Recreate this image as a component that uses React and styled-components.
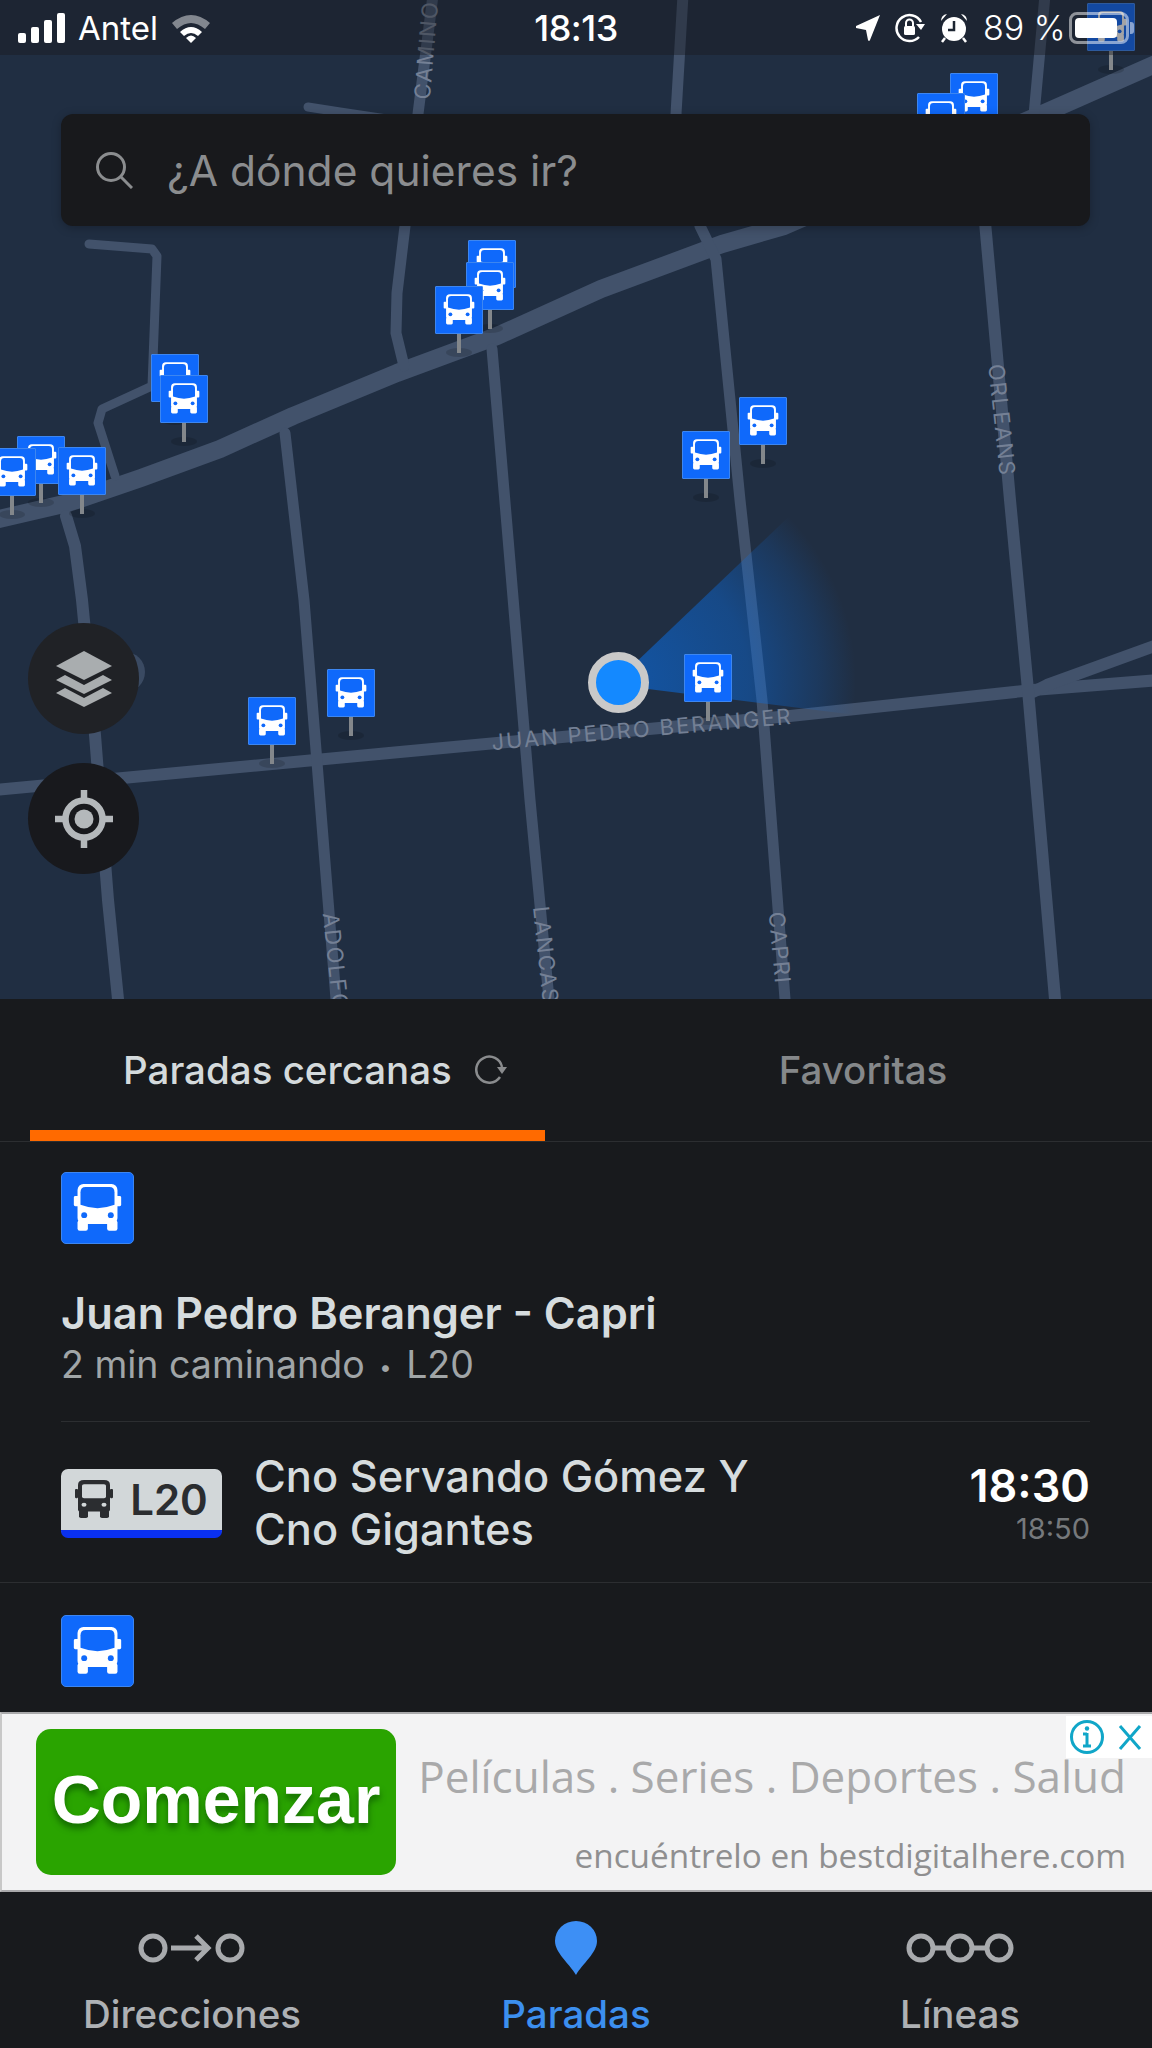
import React from 'react'
import styled, { createGlobalStyle } from 'styled-components'

const GlobalStyle = createGlobalStyle`
  html, body { margin: 0; padding: 0; background: #181a1d; }
  * { box-sizing: border-box; }
`

const Page = styled.div`
  width: 1152px;
  height: 2048px;
  display: flex;
  flex-direction: column;
  overflow: hidden;
  background: #181a1d;
  font-family: Inter, "Noto Sans", sans-serif;
`

const MapArea = styled.div`
  position: relative;
  flex: 0 0 999px;
  overflow: hidden;
  background: #202e42;
`

const MapDrawing = styled.svg`
  position: absolute;
  top: 0;
  left: 0;
`

const StreetLabel = styled.span`
  position: absolute;
  left: ${({ $x }) => $x}px;
  top: ${({ $y }) => $y}px;
  transform: translate(-50%, -50%) rotate(${({ $r }) => $r}deg);
  font-size: 22px;
  letter-spacing: ${({ $s }) => $s || 1.5}px;
  color: #748095;
  white-space: nowrap;
`

const Pin = styled.div`
  position: absolute;
  left: ${({ $x }) => $x}px;
  top: ${({ $y }) => $y}px;
  width: 48px;
  height: 70px;
  &::before {
    content: '';
    position: absolute;
    left: 11px;
    top: 62px;
    width: 26px;
    height: 9px;
    border-radius: 50%;
    background: rgba(0, 0, 0, 0.14);
  }
  &::after {
    content: '';
    position: absolute;
    left: 22px;
    top: 48px;
    width: 4px;
    height: 19px;
    background: #83878b;
  }
`

const Sign = styled.div`
  width: ${({ $big }) => ($big ? 73 : 48)}px;
  height: ${({ $big }) => ($big ? 72 : 48)}px;
  border-radius: ${({ $big }) => ($big ? 5 : 1)}px;
  background: #0f69fb;
  border: 1px solid #3d86f0;
  display: flex;
  position: relative;
  z-index: 1;
`

const Dot = styled.div`
  position: absolute;
  left: 588px;
  top: 652px;
  width: 61px;
  height: 61px;
  border-radius: 50%;
  background: #1489ff;
  border: 8px solid #c9c9c9;
`

const RoundButton = styled.div`
  position: absolute;
  z-index: 2;
  left: 28px;
  top: ${({ $y }) => $y}px;
  width: 111px;
  height: 111px;
  border-radius: 50%;
  background: ${({ $bg }) => $bg};
  display: flex;
  align-items: center;
  justify-content: center;
`

const StatusBar = styled.div`
  position: absolute;
  z-index: 3;
  top: 0;
  left: 0;
  width: 100%;
  height: 55px;
  padding: 0 0 0 18px;
  display: flex;
  align-items: center;
  color: #fff;
  font-size: 33px;
  background: rgba(24, 26, 29, 0.4);
`

const StatusLeft = styled.div`
  display: flex;
  align-items: center;
  width: 390px;
  gap: 12px;
`

const StatusTime = styled.div`
  width: 336px;
  text-align: center;
  font-size: 36px;
  font-weight: 500;
  letter-spacing: -0.5px;
`

const StatusRight = styled.div`
  display: flex;
  align-items: center;
  gap: 15px;
  padding-left: 112px;
`

const Percent = styled.span`
  white-space: nowrap;
  margin-right: -12px;
  font-size: 34px;
  font-weight: 300;
`

const Battery = styled.div`
  position: relative;
  width: 60px;
  height: 32px;
  border: 3px solid rgba(255, 255, 255, 0.5);
  border-radius: 8px;
  padding: 3px;
  &::after {
    content: '';
    position: absolute;
    right: -8px;
    top: 7px;
    width: 4px;
    height: 12px;
    border-radius: 0 3px 3px 0;
    background: rgba(255, 255, 255, 0.5);
  }
`

const BatteryFill = styled.div`
  width: 89%;
  height: 100%;
  border-radius: 4px;
  background: #fff;
`

const SearchBar = styled.div`
  position: absolute;
  z-index: 2;
  left: 61px;
  top: 114px;
  width: 1029px;
  height: 112px;
  border-radius: 12px;
  background: #18191c;
  box-shadow: 0 2px 10px rgba(0, 0, 0, 0.25);
  display: flex;
  align-items: center;
  padding-left: 34px;
  gap: 34px;
  font-size: 42.5px;
  color: #8b8d8f;
`

const TabBar = styled.div`
  flex: 0 0 143px;
  display: flex;
  padding: 0 0 0 30px;
  border-bottom: 1px solid #2c2e31;
`

const Tab = styled.div`
  position: relative;
  display: flex;
  align-items: center;
  gap: 21px;
  padding-left: ${({ $active }) => ($active ? 93 : 0)}px;
  width: ${({ $active }) => ($active ? '515px' : 'auto')};
  flex: ${({ $active }) => ($active ? '0 0 auto' : '1')};
  justify-content: ${({ $active }) => ($active ? 'flex-start' : 'center')};
  margin-left: ${({ $active }) => ($active ? 0 : 29)}px;
  font-size: 38.5px;
  font-weight: 500;
  color: ${({ $active }) => ($active ? '#d4dadc' : '#85888a')};
  &::after {
    content: '';
    display: ${({ $active }) => ($active ? 'block' : 'none')};
    position: absolute;
    left: 0;
    right: 0;
    bottom: 0;
    height: 11px;
    background: #ff6a00;
  }
`

const StopList = styled.div`
  flex: 1;
  overflow: hidden;
  display: flex;
  flex-direction: column;
`

const StopHead = styled.div`
  padding: 30px 62px 0 61px;
`

const StopTitle = styled.div`
  margin-top: 45px;
  font-size: 43.4px;
  line-height: 48px;
  font-weight: 600;
  color: #d6dcde;
`

const StopMeta = styled.div`
  margin-top: 6px;
  padding-bottom: 32px;
  font-size: 37.5px;
  line-height: 44px;
  color: #a0a5a7;
  border-bottom: 1px solid #2c2e31;
`

const Bullet = styled.span`
  font-size: 22px;
  margin: 0 4px;
  vertical-align: 3px;
`

const DepartureRow = styled.div`
  height: 161px;
  padding: 2px 62px 0 61px;
  display: flex;
  align-items: center;
  border-bottom: 1px solid #2c2e31;
`

const LineBadge = styled.div`
  width: 161px;
  height: 69px;
  margin-right: 32px;
  border-radius: 7px;
  overflow: hidden;
  background: #d2d7d9;
  border-bottom: 8px solid #0a30f0;
  display: flex;
  align-items: center;
  justify-content: center;
  gap: 17px;
  font-size: 42px;
  font-weight: 600;
  color: #2b2d30;
`

const Destination = styled.div`
  flex: 1;
  font-size: 43.4px;
  line-height: 53px;
  font-weight: 500;
  color: #d6dcde;
`

const Times = styled.div`
  display: flex;
  flex-direction: column;
  align-items: flex-end;
`

const NextTime = styled.div`
  font-size: 45px;
  line-height: 52px;
  font-weight: 600;
  color: #fff;
`

const LaterTime = styled.div`
  font-size: 29px;
  line-height: 34px;
  color: #76797c;
`

const NextStop = styled.div`
  padding: 32px 61px 0;
`

const Ad = styled.div`
  position: relative;
  flex: 0 0 180px;
  background: #f3f3f4;
  border-top: 2px solid #a9a9ab;
  border-bottom: 2px solid #a9a9ab;
  border-left: 2px solid #c8c8c8;
  padding: 15px 26px 15px 34px;
  display: flex;
  gap: 21px;
`

const AdButton = styled.div`
  flex: 0 0 360px;
  height: 146px;
  padding-bottom: 6px;
  border-radius: 15px;
  background: #2aa400;
  display: flex;
  align-items: center;
  justify-content: center;
  font-family: "Liberation Sans", Arial, sans-serif;
  font-weight: 700;
  font-size: 68px;
  color: #fff;
  text-shadow: 0 5px 6px rgba(0, 60, 0, 0.55);
`

const AdCopy = styled.div`
  flex: 1;
  display: flex;
  flex-direction: column;
  align-items: flex-end;
  justify-content: space-between;
  padding: 21px 0 0;
  margin-bottom: -4px;
  font-family: "Open Sans", sans-serif;
  white-space: nowrap;
`

const AdLine = styled.div`
  font-size: ${({ $big }) => ($big ? 44 : 33.3)}px;
  line-height: ${({ $big }) => ($big ? 52 : 48)}px;
  color: ${({ $big }) => ($big ? '#a9a9aa' : '#8f8f90')};
`

const AdControls = styled.div`
  position: absolute;
  right: 0;
  top: 2px;
  width: 86px;
  height: 42px;
  background: #fff;
  display: flex;
  align-items: center;
  justify-content: center;
`

const BottomNav = styled.nav`
  flex: 0 0 156px;
  display: grid;
  grid-template-columns: 384px 384px 384px;
`

const NavItem = styled.div`
  display: flex;
  flex-direction: column;
  align-items: center;
  padding-top: 29px;
  font-size: 38.5px;
  font-weight: 500;
  color: ${({ $active }) => ($active ? '#3c8fef' : '#aeb1b4')};
`

const NavIcon = styled.svg`
  display: block;
  margin-bottom: 16px;
`

const roads = [
  { w: 18, p: '-5,520 68,503 141,478 220,449 293,416 397,373 497,336 601,289 722,244 784,226 1040,115 1160,62' },
  { w: 12, p: '-5,790 400,752 790,716 1033,690 1160,680' },
  { w: 12, p: '1033,692 1047,685 1160,644' },
  { w: 11, p: '285,433 304,600 328,900 336,999' },
  { w: 11, p: '492,349 507,526 530,800 549,999' },
  { w: 11, p: '683,-5 676,114 700,226 716,259 740,500 762,700 785,999' },
  { w: 12, p: '985,222 1010,500 1028,690 1055,999' },
  { w: 11, p: '1045,-5 1034,115' },
  { w: 11, p: '433,-5 418,114 405,226 397,293 396,333 404,366' },
  { w: 9, p: '308,107 340,112 420,124' },
  { w: 9, p: '89,244 152,249 157,256 152,386 102,409 98,423 115,476' },
  { w: 12, p: '66,516 75,546 82,600 95,735 108,900 118,999' },
]

const pins = [
  [1087, 3], [950, 73], [917, 93], [468, 240], [466, 262], [435, 286],
  [151, 354], [160, 375], [17, 436], [-12, 448], [58, 447],
  [682, 431], [739, 397], [684, 654], [327, 669], [248, 697],
]

const labels = [
  { t: 'CAMINO', x: 426, y: 50, r: -85 },
  { t: 'ORLEANS', x: 1002, y: 420, r: 84 },
  { t: 'ADOLFO', x: 336, y: 962, r: 84 },
  { t: 'LANCAS', x: 546, y: 955, r: 84 },
  { t: 'CAPRI', x: 780, y: 948, r: 85 },
  { t: 'JUAN PEDRO BERANGER', x: 642, y: 729, r: -5, s: 2 },
]

function BusIcon({ size = 48 }) {
  return (
    <svg width={size - 2} height={size - 2} viewBox="0 0 48 48">
      <rect x="8" y="15.5" width="4" height="7" rx="1" fill="#fff" />
      <rect x="36" y="15.5" width="4" height="7" rx="1" fill="#fff" />
      <rect x="10.5" y="7.5" width="27" height="27" rx="4" fill="#fff" />
      <rect x="10.5" y="32" width="7" height="7" rx="1.5" fill="#fff" />
      <rect x="30.5" y="32" width="7" height="7" rx="1.5" fill="#fff" />
      <path d="M16 9.5h16q3.5 0 3.5 3.5v8.5q-11.5 4.500 -23 0V13q0-3.500 3.500-3.500z" fill="#0f69fb" />
      <circle cx="15" cy="28.500" r="2" fill="#0f69fb" />
      <circle cx="33" cy="28.500" r="2" fill="#0f69fb" />
    </svg>
  )
}

function MapShapes() {
  return (
    <MapDrawing width="1152" height="999" viewBox="0 0 1152 999">
      <defs>
        <radialGradient id="cone" gradientUnits="userSpaceOnUse" cx="618" cy="682" r="238">
          <stop offset="0" stopColor="#0a6fe6" stopOpacity="0.6" />
          <stop offset="0.55" stopColor="#0a6fe6" stopOpacity="0.42" />
          <stop offset="0.85" stopColor="#0a6fe6" stopOpacity="0.16" />
          <stop offset="1" stopColor="#0a6fe6" stopOpacity="0" />
        </radialGradient>
      </defs>
      {roads.map((r, i) => (
        <polyline key={i} points={r.p} fill="none" stroke="#42526b" strokeWidth={r.w} strokeLinejoin="round" strokeLinecap="round" />
      ))}
      <circle cx="125" cy="672" r="20" fill="#3a4a62" />
      <path d="M630 668 L800 506 L880 470 L880 718 L640 688 Z" fill="url(#cone)" />
    </MapDrawing>
  )
}

function LayersIcon() {
  return (
    <svg width="56" height="56" viewBox="0 0 56 56" fill="#a9adaf">
      <path d="M28 0 56 15 28 29 0 15z" />
      <path d="M9 24 28 34 47 24 56 29 28 43 0 29z" />
      <path d="M9 37 28 47 47 37 56 42 28 56 0 42z" />
    </svg>
  )
}

function LocateIcon() {
  return (
    <svg width="58" height="58" viewBox="0 0 58 58">
      <circle cx="29" cy="29" r="18.500" fill="none" stroke="#b4b8bb" strokeWidth="6.500" />
      <circle cx="29" cy="29" r="9.500" fill="#b4b8bb" />
      <path d="M29 0v10M29 48v10M0 29h10M48 29h10" stroke="#b4b8bb" strokeWidth="6.500" />
    </svg>
  )
}

function SignalIcon() {
  return (
    <svg width="48" height="30" viewBox="0 0 48 30" fill="#fff">
      <rect x="0" y="20" width="8" height="10" rx="2" />
      <rect x="13" y="14" width="8" height="16" rx="2" />
      <rect x="26" y="7" width="8" height="23" rx="2" />
      <rect x="39" y="0" width="8" height="30" rx="2" />
    </svg>
  )
}

function WifiIcon() {
  return (
    <svg width="42" height="30" viewBox="0 0 42 30">
      <path d="M2 10Q21-6 40 10L35 16Q21 4 7 16z" fill="#fff" fillOpacity="0.45" />
      <path d="M10 19Q21 9 32 19L28 23Q21 17 14 23z" fill="#fff" />
      <path d="M16 25Q21 20 26 25L21 30z" fill="#fff" />
    </svg>
  )
}

function ArrowIcon() {
  return (
    <svg width="24" height="26" viewBox="0 0 24 26">
      <path d="M24 0 14 25q-1 2-2 0L10 15 0 13q-2-1 0-2z" fill="#fff" />
    </svg>
  )
}

function RotationLockIcon() {
  return (
    <svg width="30" height="30" viewBox="0 0 30 30">
      <path d="M24 24A13 13 0 1 1 26 9" fill="none" stroke="#fff" strokeWidth="2.500" />
      <path d="M21 11h9l-4 6z" fill="#fff" />
      <rect x="9" y="13" width="11" height="9" rx="1.500" fill="#fff" />
      <path d="M11 13V10a3.500 3.500 0 0 1 7 0v3" fill="none" stroke="#fff" strokeWidth="2" />
    </svg>
  )
}

function AlarmIcon() {
  return (
    <svg width="28" height="30" viewBox="0 0 28 30">
      <circle cx="14" cy="16" r="12" fill="#fff" />
      <path d="M1 8Q1 2 7 1zM27 8Q27 2 21 1z" fill="#fff" />
      <path d="M5 25 2 29M23 25l3 4" stroke="#fff" strokeWidth="2.500" />
      <path d="M14 8v9H8" fill="none" stroke="#1c2531" strokeWidth="2.500" />
    </svg>
  )
}

function SearchIcon() {
  return (
    <svg width="38" height="38" viewBox="0 0 38 38" fill="none" stroke="#8b8d8f" strokeWidth="3">
      <circle cx="16" cy="16" r="13.500" />
      <path d="M26 26 37 37" />
    </svg>
  )
}

function RefreshIcon() {
  return (
    <svg width="34" height="30" viewBox="0 0 34 30">
      <path d="M27 22A13 13 0 1 1 29 12" fill="none" stroke="#8a8c8e" strokeWidth="2.500" />
      <path d="M24 12h10l-5 7z" fill="#8a8c8e" />
    </svg>
  )
}

function DarkBus() {
  return (
    <svg width="38" height="38" viewBox="0 0 38 46" preserveAspectRatio="none" fill="#2b2d30">
      <rect x="0" y="11" width="3" height="11" rx="1" />
      <rect x="35" y="11" width="3" height="11" rx="1" />
      <path d="M9 0h20q6 0 6 6v30q0 2-2 2H5q-2 0-2-2V6q0-6 6-6z" />
      <rect x="4" y="36" width="9" height="10" rx="2" />
      <rect x="25" y="36" width="9" height="10" rx="2" />
      <rect x="7" y="5" width="24" height="17" rx="2" fill="#d2d7d9" />
      <circle cx="9" cy="30" r="2.500" fill="#d2d7d9" />
      <circle cx="29" cy="30" r="2.500" fill="#d2d7d9" />
    </svg>
  )
}

function AdClose() {
  return (
    <svg width="84" height="40" viewBox="0 0 84 40" fill="none" stroke="#10a6c8">
      <circle cx="20" cy="20" r="15.500" strokeWidth="3" />
      <circle cx="20" cy="11.500" r="2.200" fill="#10a6c8" stroke="none" />
      <path d="M20 16v13M16 17h4M16 29h8" strokeWidth="3" />
      <path d="M53 9 73 32M73 9 53 32" strokeWidth="3" />
    </svg>
  )
}

export default function App() {
  return (
    <Page>
      <GlobalStyle />
      <MapArea>
        <MapShapes />
        {labels.map(l => (
          <StreetLabel key={l.t} $x={l.x} $y={l.y} $r={l.r} $s={l.s}>{l.t}</StreetLabel>
        ))}
        <Dot />
        {pins.map(([x, y]) => (
          <Pin key={x + '-' + y} $x={x} $y={y}>
            <Sign><BusIcon /></Sign>
          </Pin>
        ))}
        <RoundButton $y={623} $bg="#202226"><LayersIcon /></RoundButton>
        <RoundButton $y={763} $bg="#18191d"><LocateIcon /></RoundButton>
        <StatusBar>
          <StatusLeft>
            <SignalIcon />
            <span>Antel</span>
            <WifiIcon />
          </StatusLeft>
          <StatusTime>18:13</StatusTime>
          <StatusRight>
            <ArrowIcon />
            <RotationLockIcon />
            <AlarmIcon />
            <Percent>89 %</Percent>
            <Battery><BatteryFill /></Battery>
          </StatusRight>
        </StatusBar>
        <SearchBar>
          <SearchIcon />
          <span>¿A dónde quieres ir?</span>
        </SearchBar>
      </MapArea>

      <TabBar>
        <Tab $active>Paradas cercanas <RefreshIcon /></Tab>
        <Tab>Favoritas</Tab>
      </TabBar>

      <StopList>
        <StopHead>
          <Sign $big><BusIcon size={73} /></Sign>
          <StopTitle>Juan Pedro Beranger - Capri</StopTitle>
          <StopMeta>2 min caminando <Bullet>•</Bullet> L20</StopMeta>
        </StopHead>
        <DepartureRow>
          <LineBadge><DarkBus />L20</LineBadge>
          <Destination>Cno Servando Gómez Y<br />Cno Gigantes</Destination>
          <Times>
            <NextTime>18:30</NextTime>
            <LaterTime>18:50</LaterTime>
          </Times>
        </DepartureRow>
        <NextStop>
          <Sign $big><BusIcon size={73} /></Sign>
        </NextStop>
      </StopList>

      <Ad>
        <AdButton>Comenzar</AdButton>
        <AdCopy>
          <AdLine $big>Películas . Series . Deportes . Salud</AdLine>
          <AdLine>encuéntrelo en bestdigitalhere.com</AdLine>
        </AdCopy>
        <AdControls><AdClose /></AdControls>
      </Ad>

      <BottomNav>
        <NavItem>
          <NavIcon width="108" height="54" viewBox="0 0 108 54" fill="none" stroke="#a8aaad" strokeWidth="5">
            <circle cx="15" cy="27" r="12" />
            <circle cx="92" cy="27" r="12" />
            <path d="M33 27h36M58 15l12 12-12 12" />
          </NavIcon>
          Direcciones
        </NavItem>
        <NavItem $active>
          <NavIcon width="44" height="54" viewBox="0 0 44 54">
            <path d="M22 54C15 42 1 32 1 20a21 20 0 0 1 42 0C43 32 29 42 22 54z" fill="#3d8ff5" />
          </NavIcon>
          Paradas
        </NavItem>
        <NavItem>
          <NavIcon width="108" height="54" viewBox="0 0 108 54" fill="none" stroke="#a8aaad" strokeWidth="5">
            <circle cx="15" cy="27" r="12" />
            <circle cx="54" cy="27" r="12" />
            <circle cx="93" cy="27" r="12" />
            <path d="M27 27h15M66 27h15" />
          </NavIcon>
          Líneas
        </NavItem>
      </BottomNav>
    </Page>
  )
}
